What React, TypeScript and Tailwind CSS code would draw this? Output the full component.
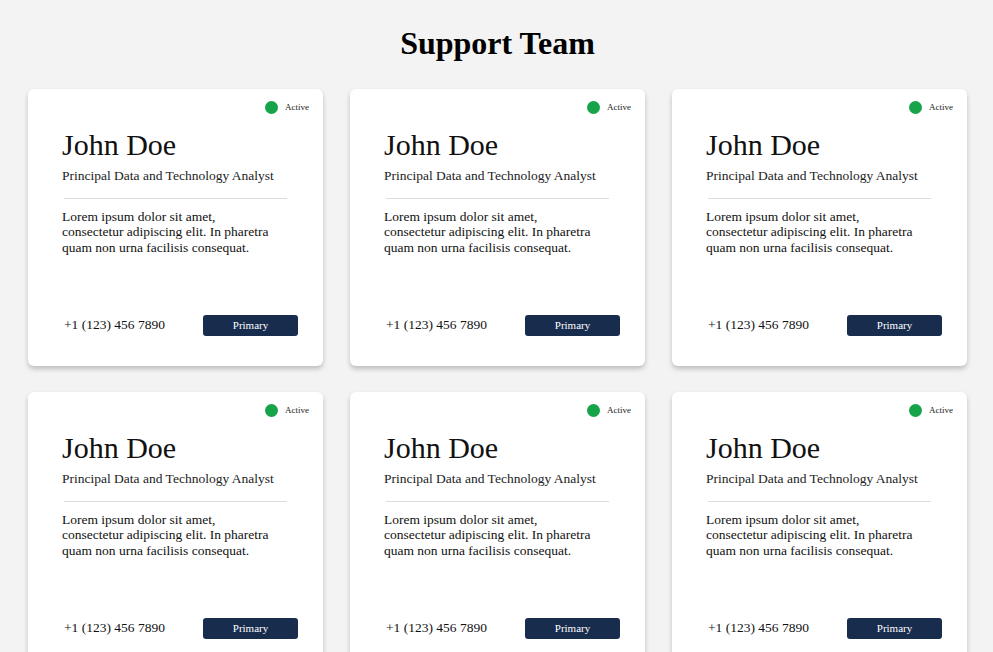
import React from 'react';

const members = Array.from({ length: 6 }, (_, i) => ({
  id: i,
  name: 'John Doe',
  role: 'Principal Data and Technology Analyst',
  bio: [
    'Lorem ipsum dolor sit amet,',
    'consectetur adipiscing elit. In pharetra',
    'quam non urna facilisis consequat.',
  ],
  phone: '+1 (123) 456 7890',
}));

function MemberCard({ name, role, bio, phone }: { name: string; role: string; bio: string[]; phone: string }) {
  return (
    <div className="flex h-[277px] flex-col rounded-md bg-white shadow-[0_3px_5px_rgba(0,0,0,0.22)]">
      {/* Status */}
      <div className="flex items-center justify-end gap-[7px] pt-[12px] pr-[14px]">
        <span className="h-[13px] w-[13px] rounded-full bg-[#16a34a]" />
        <span className="text-[9px] text-[#222]">Active</span>
      </div>

      <div className="pl-[34px] pr-[36px]">
        <h2 className="mt-[12px] text-[30px] leading-[36px] text-[#111]">{name}</h2>
        <p className="mt-[4px] text-[13.5px] leading-[18px] text-[#222]">{role}</p>
        <hr className="mt-[13px] ml-[2px] border-t border-[#dcdcdc]" />
        <p className="mt-[10px] text-[13.5px] leading-[15.5px] text-[#111]">
          {bio.map((line, i) => (
            <React.Fragment key={i}>
              {line}
              {i < bio.length - 1 && <br />}
            </React.Fragment>
          ))}
        </p>
      </div>

      {/* Footer */}
      <div className="mt-auto flex items-center justify-between pb-[30px] pl-[36px] pr-[25px]">
        <span className="text-[13.5px] text-[#111]">{phone}</span>
        <button className="h-[21px] w-[95px] rounded-[3px] bg-[#182c4e] text-[11px] text-white">Primary</button>
      </div>
    </div>
  );
}

export default function App() {
  return (
    <div className="min-h-screen bg-[#f3f3f3] px-[26px] pb-10 pl-[28px] font-['Liberation_Serif',serif]">
      <h1 className="pt-[23px] pb-[26px] text-center text-[32px] leading-[40px] font-bold text-black">Support Team</h1>
      <div className="grid grid-cols-3 gap-x-[27px] gap-y-[26px]">
        {members.map((m) => (
          <MemberCard key={m.id} {...m} />
        ))}
      </div>
    </div>
  );
}
